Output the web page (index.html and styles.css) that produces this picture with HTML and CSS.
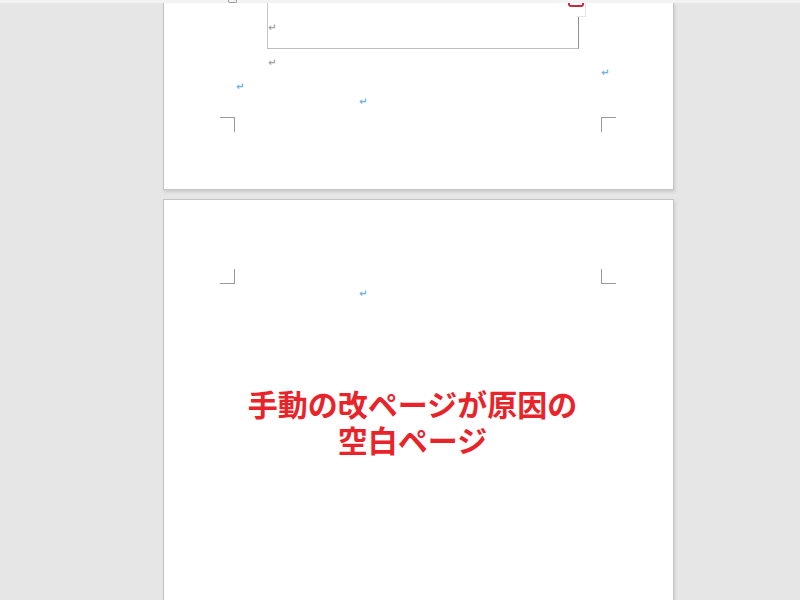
FILE: index.html
```html
<!DOCTYPE html>
<html lang="ja">
<head>
<meta charset="utf-8">
<link rel="stylesheet" href="styles.css">
</head>
<body>
<div class="strip"><span class="chk"></span></div>
<div class="page page1">
  <div class="tbl">
    <div class="tab"><span class="redbar"></span></div>
    <div class="mk gray tblmk">↵</div>
  </div>
  <div class="row r1"><span class="mk gray">↵</span></div>
  <div class="row r2"><span class="mk blue">↵</span></div>
  <div class="row r3"><span class="mk blue">↵</span></div>
  <div class="row r4"><span class="mk blue">↵</span></div>
  <div class="corners top">
    <span class="cn cn-tl"></span>
    <span class="cn cn-tr"></span>
  </div>
</div>
<div class="page page2">
  <div class="corners bottom">
    <span class="cn cn-bl"></span>
    <span class="cn cn-br"></span>
  </div>
  <div class="row r5"><span class="mk blue">↵</span></div>
  <div class="caption">
    <div class="cap-line">手動の改ページが原因の</div>
    <div class="cap-line">空白ページ</div>
  </div>
</div>
</body>
</html>
```

FILE: styles.css
```css
html, body {
  margin: 0;
  padding: 0;
  height: 100%;
  overflow: hidden;
}
body {
  background: #e6e6e6;
  font-family: "DejaVu Sans", sans-serif;
}
.strip {
  height: 3px;
  background: #f3f3f3;
  display: flex;
}
.chk {
  margin-left: 228px;
  width: 7px;
  height: 2px;
  border: 1px solid #9a9a9a;
  border-top: none;
  border-radius: 0 0 2px 2px;
}
.page {
  margin-left: 163px;
  width: 511px;
  box-sizing: border-box;
  background: #fff;
  border: 1px solid #c4c4c4;
  box-shadow: 1px 2px 3px rgba(0,0,0,0.12);
}
.page1 {
  border-top: none;
  height: 187px;
}
.page2 {
  margin-top: 9px;
  height: 420px;
}
.tbl {
  position: relative;
  margin-left: 103px;
  width: 312px;
  height: 46px;
  box-sizing: border-box;
  border-left: 1px solid #c8c8c8;
  border-right: 1px solid #8e8e8e;
  border-bottom: 1px solid #bdbdbd;
}
.tab {
  position: absolute;
  right: -8px;
  top: 0;
  width: 8px;
  height: 13px;
  background: #fff;
  border-right: 1px solid #e4e4e4;
  border-bottom: 1px solid #e4e4e4;
}
.redbar {
  position: absolute;
  right: 1px;
  top: 0;
  width: 12px;
  height: 2px;
  border: 2px solid #cc2a3c;
  border-top: none;
  border-radius: 0 0 3px 3px;
}
.tblmk {
  display: block;
  padding-top: 21px;
  height: 8px;
  line-height: 8px;
}
.mk {
  font-size: 10px;
  font-weight: 700;
  line-height: 8px;
}
.gray { color: #a4a4a4; }
.blue { color: #6cb2e6; }
.row {
  height: 8px;
  line-height: 8px;
}
.r1 { margin-top: 8px; padding-left: 104px; }
.r2 { margin-top: 2px; padding-left: 437px; }
.r3 { margin-top: 6px; padding-left: 72px; }
.r4 { margin-top: 7px; padding-left: 195px; }
.r5 { margin-top: 4px; padding-left: 195px; }
.corners {
  display: flex;
  gap: 366px;
  padding-left: 56px;
}
.corners.top { margin-top: 13px; }
.corners.bottom { margin-top: 69px; }
.cn {
  display: block;
  width: 14px;
  height: 14px;
}
.cn-tl { border-top: 1px solid #9a9a9a; border-right: 1px solid #9a9a9a; }
.cn-tr { border-top: 1px solid #9a9a9a; border-left: 1px solid #9a9a9a; }
.cn-bl { border-bottom: 1px solid #9a9a9a; border-right: 1px solid #9a9a9a; }
.cn-br { border-bottom: 1px solid #9a9a9a; border-left: 1px solid #9a9a9a; }
.caption {
  margin-top: 89px;
  padding-right: 12px;
  text-align: center;
  font-family: "Noto Sans CJK JP", sans-serif;
  font-weight: 700;
  font-size: 30px;
  color: #e8242a;
}
.cap-line {
  line-height: 36px;
}
```
